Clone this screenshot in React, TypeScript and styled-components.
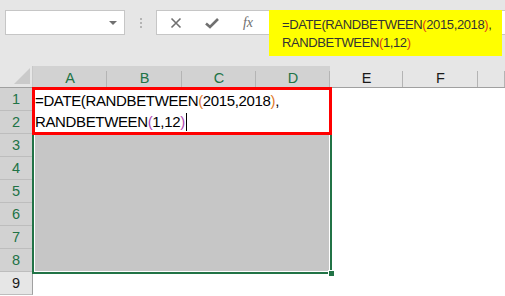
import { Fragment } from 'react';
import styled, { createGlobalStyle } from 'styled-components';

const GlobalStyle = createGlobalStyle`
  html, body {
    margin: 0;
    padding: 0;
    background: #ffffff;
  }
  * {
    box-sizing: border-box;
  }
`;

const Screen = styled.div`
  width: 505px;
  height: 296px;
  overflow: hidden;
  background: #ffffff;
  font-family: 'Liberation Sans', Arial, sans-serif;
  display: flex;
  flex-direction: column;
`;

const Toolbar = styled.div`
  position: relative;
  height: 66px;
  flex: none;
  background: #e6e6e6;
  display: flex;
  align-items: flex-start;
  padding: 10px 0 0 5px;
`;

const NameBox = styled.div`
  width: 120px;
  height: 25px;
  background: #ffffff;
  border: 1px solid #c6c6c6;
  display: flex;
  align-items: center;
  justify-content: flex-end;
  padding-right: 7px;
`;

const DropArrow = styled.span`
  width: 0;
  height: 0;
  border-left: 4px solid transparent;
  border-right: 4px solid transparent;
  border-top: 4px solid #707070;
`;

const Divider = styled.div`
  width: 31px;
  height: 25px;
  display: flex;
  flex-direction: column;
  align-items: center;
  justify-content: center;
  gap: 2px;

  span {
    width: 2px;
    height: 2px;
    background: #b4b4b4;
  }
`;

const FormulaBar = styled.div`
  flex: 1;
  height: 25px;
  background: #ffffff;
  border: 1px solid #c6c6c6;
  border-right: none;
  display: flex;
  align-items: center;
  padding-left: 12px;
  gap: 22px;
`;

const IconSlot = styled.div`
  width: 14px;
  height: 14px;
  display: flex;
  align-items: center;
  justify-content: center;
`;

const Fx = styled.span`
  font-family: 'Liberation Serif', 'Times New Roman', serif;
  font-style: italic;
  font-size: 14px;
  color: #6e6e6e;
  line-height: 1;
`;

const Callout = styled.div`
  position: absolute;
  left: 269px;
  top: 10px;
  width: 233px;
  height: 46px;
  background: #ffff00;
  padding: 6px 0 0 13px;
  font-size: 13px;
  letter-spacing: -0.38px;
  line-height: 18px;
  color: #333333;
`;

const Paren = styled.span<{ $tone: string }>`
  color: ${(p) => p.$tone};
`;

const Sheet = styled.div`
  position: relative;
  flex: 1;
  display: grid;
  grid-template-columns: 33px 74px 75px 74px 74px 73px 75px 1fr;
  grid-template-rows: 22px repeat(9, 23px);
`;

const Corner = styled.div`
  position: relative;
  background: #e6e6e6;
  border-bottom: 1px solid #a0a0a0;
  border-right: 1px solid #c8c8c8;

  &::after {
    content: '';
    position: absolute;
    right: 2px;
    bottom: 3px;
    width: 0;
    height: 0;
    border-left: 16px solid transparent;
    border-bottom: 16px solid #cacaca;
  }
`;

const ColHead = styled.div<{ $on?: boolean }>`
  position: relative;
  background: ${(p) => (p.$on ? '#d2d2d2' : '#e6e6e6')};
  color: ${(p) => (p.$on ? '#217346' : '#1a1a1a')};
  border-bottom: 1px solid ${(p) => (p.$on ? '#217346' : '#a0a0a0')};
  font-size: 14.5px;
  display: flex;
  align-items: center;
  justify-content: center;
  padding-top: 2px;

  &::after {
    content: '';
    position: absolute;
    right: 0;
    top: 5px;
    bottom: 0;
    width: 1px;
    background: #b4b4b4;
  }
`;

const RowHead = styled.div<{ $on?: boolean }>`
  background: ${(p) => (p.$on ? '#d2d2d2' : '#e6e6e6')};
  color: ${(p) => (p.$on ? '#217346' : '#1a1a1a')};
  border-right: 1px solid #a0a0a0;
  border-bottom: 1px solid #bdbdbd;
  font-size: 14.5px;
  display: flex;
  align-items: center;
  justify-content: center;
`;

const Cell = styled.div<{ $on?: boolean }>`
  background: ${(p) => (p.$on ? '#c6c6c6' : '#ffffff')};
`;

const Selection = styled.div`
  position: absolute;
  left: 32px;
  top: 21px;
  width: 300px;
  height: 187px;
  border: 2px solid #217346;
  box-shadow: inset 0 0 0 1px #ffffff;
  pointer-events: none;
`;

const FillHandle = styled.div`
  position: absolute;
  right: -5px;
  bottom: -5px;
  width: 7px;
  height: 7px;
  background: #217346;
  border: 1px solid #ffffff;
`;

const Editor = styled.div`
  position: absolute;
  left: 32px;
  top: 21px;
  width: 300px;
  height: 48px;
  background: #ffffff;
  border: 3px solid #ff0000;
  font-size: 15px;
  letter-spacing: -0.36px;
  line-height: 21px;
  color: #000000;
`;

const Caret = styled.span`
  display: inline-block;
  width: 1px;
  height: 18px;
  margin-left: 1px;
  background: #000000;
  vertical-align: -4px;
`;

const columns = ['A', 'B', 'C', 'D', 'E', 'F', ''];
const rows = [1, 2, 3, 4, 5, 6, 7, 8, 9];

const App = () => {
  return (
    <Screen>
      <GlobalStyle />
      <Toolbar>
        <NameBox>
          <DropArrow />
        </NameBox>
        <Divider>
          <span />
          <span />
          <span />
        </Divider>
        <FormulaBar>
          <IconSlot>
            <svg width="12" height="12" viewBox="0 0 12 12">
              <path d="M1.5 1.5 L10.5 10.5 M10.5 1.5 L1.5 10.5" stroke="#707070" strokeWidth="1.6" fill="none" />
            </svg>
          </IconSlot>
          <IconSlot>
            <svg width="14" height="12" viewBox="0 0 14 12">
              <path d="M1 6.5 L5 10 L13 2" stroke="#707070" strokeWidth="2.6" fill="none" />
            </svg>
          </IconSlot>
          <IconSlot>
            <Fx>fx</Fx>
          </IconSlot>
        </FormulaBar>
        <Callout>
          <div>
            =DATE(RANDBETWEEN<Paren $tone="#e03c1e">(</Paren>2015,2018<Paren $tone="#e03c1e">)</Paren>,
          </div>
          <div>
            RANDBETWEEN<Paren $tone="#e03c1e">(</Paren>1,12<Paren $tone="#e03c1e">)</Paren>
          </div>
        </Callout>
      </Toolbar>

      <Sheet>
        <Corner />
        {columns.map((c, i) => (
          <ColHead key={'c' + i} $on={i < 4}>
            {c}
          </ColHead>
        ))}
        {rows.map((r) => (
          <Fragment key={'r' + r}>
            <RowHead $on={r <= 8}>{r}</RowHead>
            {columns.map((c, i) => (
              <Cell key={'c' + i} $on={r <= 8 && i < 4} />
            ))}
          </Fragment>
        ))}

        <Selection>
          <FillHandle />
        </Selection>

        <Editor>
          <div>
            =DATE(RANDBETWEEN<Paren $tone="#e07b2c">(</Paren>2015,2018<Paren $tone="#e07b2c">)</Paren>,
          </div>
          <div>
            RANDBETWEEN<Paren $tone="#b04bb4">(</Paren>1,12<Paren $tone="#b04bb4">)</Paren>
            <Caret />
          </div>
        </Editor>
      </Sheet>
    </Screen>
  );
};

export default App;
